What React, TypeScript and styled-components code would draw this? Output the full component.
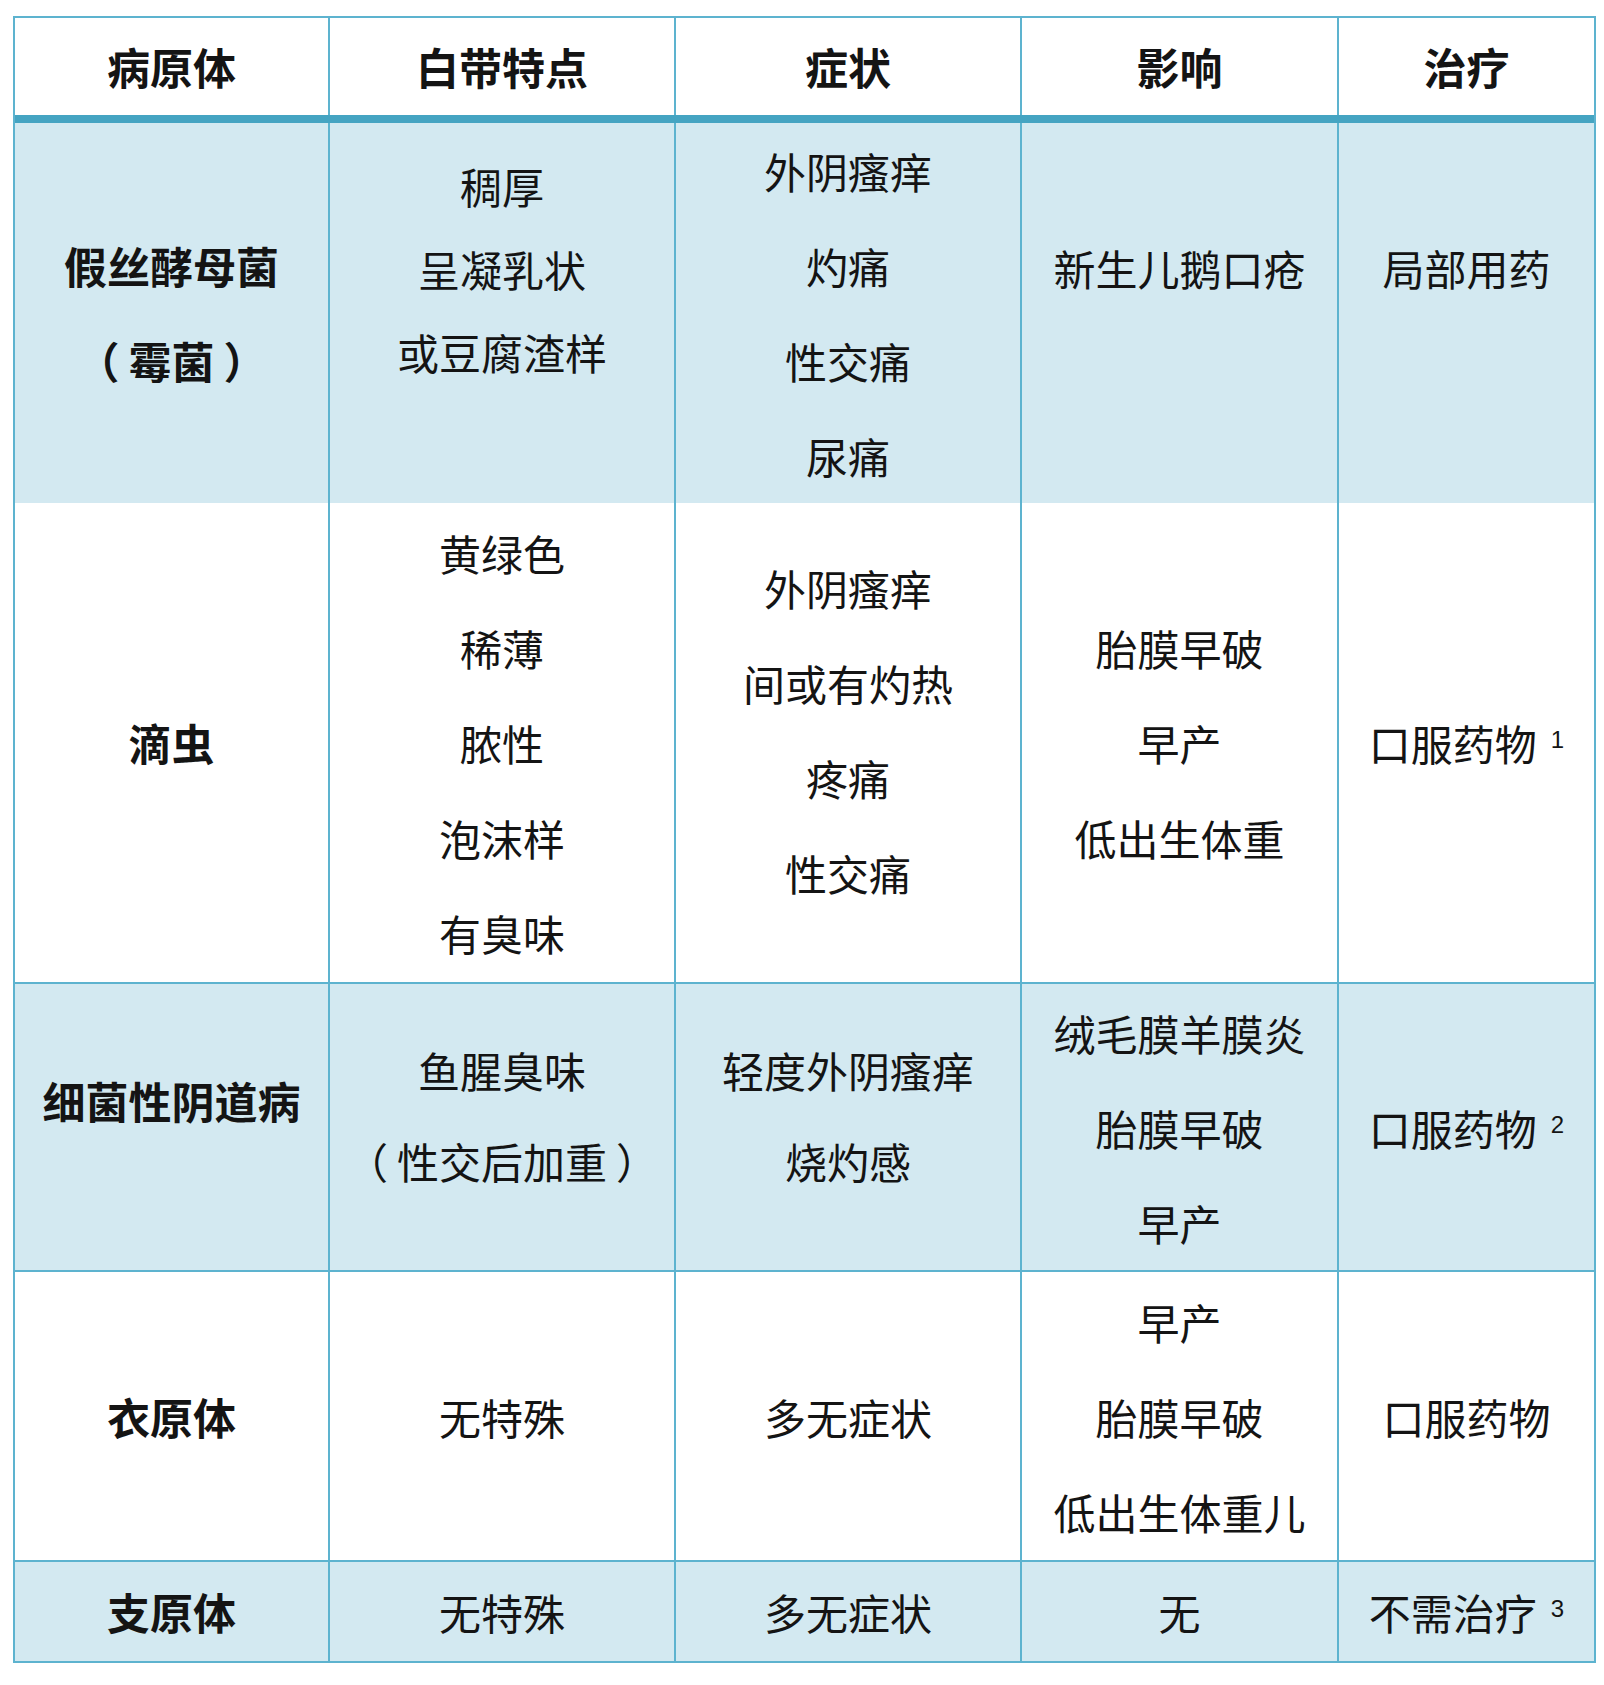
import React from "react";
import styled, { createGlobalStyle } from "styled-components";

const GlobalStyle = createGlobalStyle`
  html, body {
    margin: 0;
    padding: 0;
    background: #ffffff;
  }
  body {
    font-family: "Noto Sans CJK SC", "Noto Sans", sans-serif;
    color: #141414;
  }
`;

const LINE = "#5db3cf";
const BAND = "#45a4c2";
const TINT = "#d3e9f1";

const Page = styled.div`
  padding: 16px 0 0 13px;
`;

const Table = styled.div`
  width: 1583px;
  box-sizing: border-box;
  border: 2px solid ${LINE};
  display: flex;
  flex-direction: column;
  background: ${LINE};
`;

const Row = styled.div<{ $h: number; $tint?: boolean; $ruled?: boolean }>`
  display: grid;
  grid-template-columns: 313px 344px 344px 315px 255px;
  column-gap: 2px;
  height: ${(p) => p.$h}px;
  margin-top: ${(p) => (p.$ruled ? 2 : 0)}px;
  & > div {
    background: ${(p) => (p.$tint ? TINT : "#ffffff")};
  }
`;

const Band = styled.div`
  height: 8px;
  background: ${BAND};
`;

const Cell = styled.div<{ $bold?: boolean; $lh?: number; $lift?: number }>`
  display: flex;
  flex-direction: column;
  align-items: center;
  justify-content: center;
  box-sizing: border-box;
  padding-bottom: ${(p) => p.$lift ?? 0}px;
  font-size: ${(p) => (p.$bold ? 43 : 42)}px;
  font-weight: ${(p) => (p.$bold ? 700 : 400)};
  line-height: ${(p) => p.$lh ?? 95}px;
  white-space: nowrap;
`;

const Line = styled.div`
  text-align: center;
`;

const Punct = styled.span<{ $open?: boolean }>`
  margin-right: ${(p) => (p.$open ? 9 : 0)}px;
  margin-left: ${(p) => (p.$open ? 0 : 9)}px;
`;

const Sup = styled.span`
  font-family: "Liberation Sans", Arial, sans-serif;
  font-size: 24px;
  font-weight: 400;
  vertical-align: 13px;
  line-height: 0;
  margin-left: 14px;
`;

type CellData = {
  lines: string[];
  sup?: string;
  bold?: boolean;
  lh?: number;
  lift?: number;
};

type RowData = { h: number; tint: boolean; cells: CellData[] };

const header = ["病原体", "白带特点", "症状", "影响", "治疗"];

const rows: RowData[] = [
  {
    h: 378,
    tint: true,
    cells: [
      { lines: ["假丝酵母菌", "（霉菌）"], bold: true },
      { lines: ["稠厚", "呈凝乳状", "或豆腐渣样"], lh: 83, lift: 90 },
      { lines: ["外阴瘙痒", "灼痛", "性交痛", "尿痛"] },
      { lines: ["新生儿鹅口疮"], lift: 92 },
      { lines: ["局部用药"], lift: 92 },
    ],
  },
  {
    h: 479,
    tint: false,
    cells: [
      { lines: ["滴虫"], bold: true },
      { lines: ["黄绿色", "稀薄", "脓性", "泡沫样", "有臭味"] },
      { lines: ["外阴瘙痒", "间或有灼热", "疼痛", "性交痛"], lift: 26 },
      { lines: ["胎膜早破", "早产", "低出生体重"] },
      { lines: ["口服药物"], sup: "1" },
    ],
  },
  {
    h: 286,
    tint: true,
    cells: [
      { lines: ["细菌性阴道病"], bold: true, lift: 54 },
      { lines: ["鱼腥臭味", "（性交后加重）"], lh: 91, lift: 24 },
      { lines: ["轻度外阴瘙痒", "烧灼感"], lh: 91, lift: 24 },
      { lines: ["绒毛膜羊膜炎", "胎膜早破", "早产"] },
      { lines: ["口服药物"], sup: "2" },
    ],
  },
  {
    h: 288,
    tint: false,
    cells: [
      { lines: ["衣原体"], bold: true },
      { lines: ["无特殊"] },
      { lines: ["多无症状"] },
      { lines: ["早产", "胎膜早破", "低出生体重儿"] },
      { lines: ["口服药物"] },
    ],
  },
  {
    h: 99,
    tint: true,
    cells: [
      { lines: ["支原体"], bold: true },
      { lines: ["无特殊"] },
      { lines: ["多无症状"] },
      { lines: ["无"] },
      { lines: ["不需治疗"], sup: "3" },
    ],
  },
];

function renderText(text: string) {
  return text.split(/([（）])/).map((part, i) =>
    part === "（" || part === "）" ? (
      <Punct key={i} $open={part === "（"}>
        {part}
      </Punct>
    ) : (
      part
    )
  );
}

export default function App() {
  return (
    <>
      <GlobalStyle />
      <Page>
        <Table>
          <Row $h={97}>
            {header.map((t) => (
              <Cell key={t} $bold>
                <Line>{t}</Line>
              </Cell>
            ))}
          </Row>
          <Band />
          {rows.map((r, ri) => (
            <Row key={ri} $h={r.h} $tint={r.tint} $ruled={ri > 0}>
              {r.cells.map((c, ci) => (
                <Cell key={ci} $bold={c.bold} $lh={c.lh} $lift={c.lift}>
                  {c.lines.map((l, li) => (
                    <Line key={li}>
                      {renderText(l)}
                      {c.sup && li === c.lines.length - 1 ? <Sup>{c.sup}</Sup> : null}
                    </Line>
                  ))}
                </Cell>
              ))}
            </Row>
          ))}
        </Table>
      </Page>
    </>
  );
}
